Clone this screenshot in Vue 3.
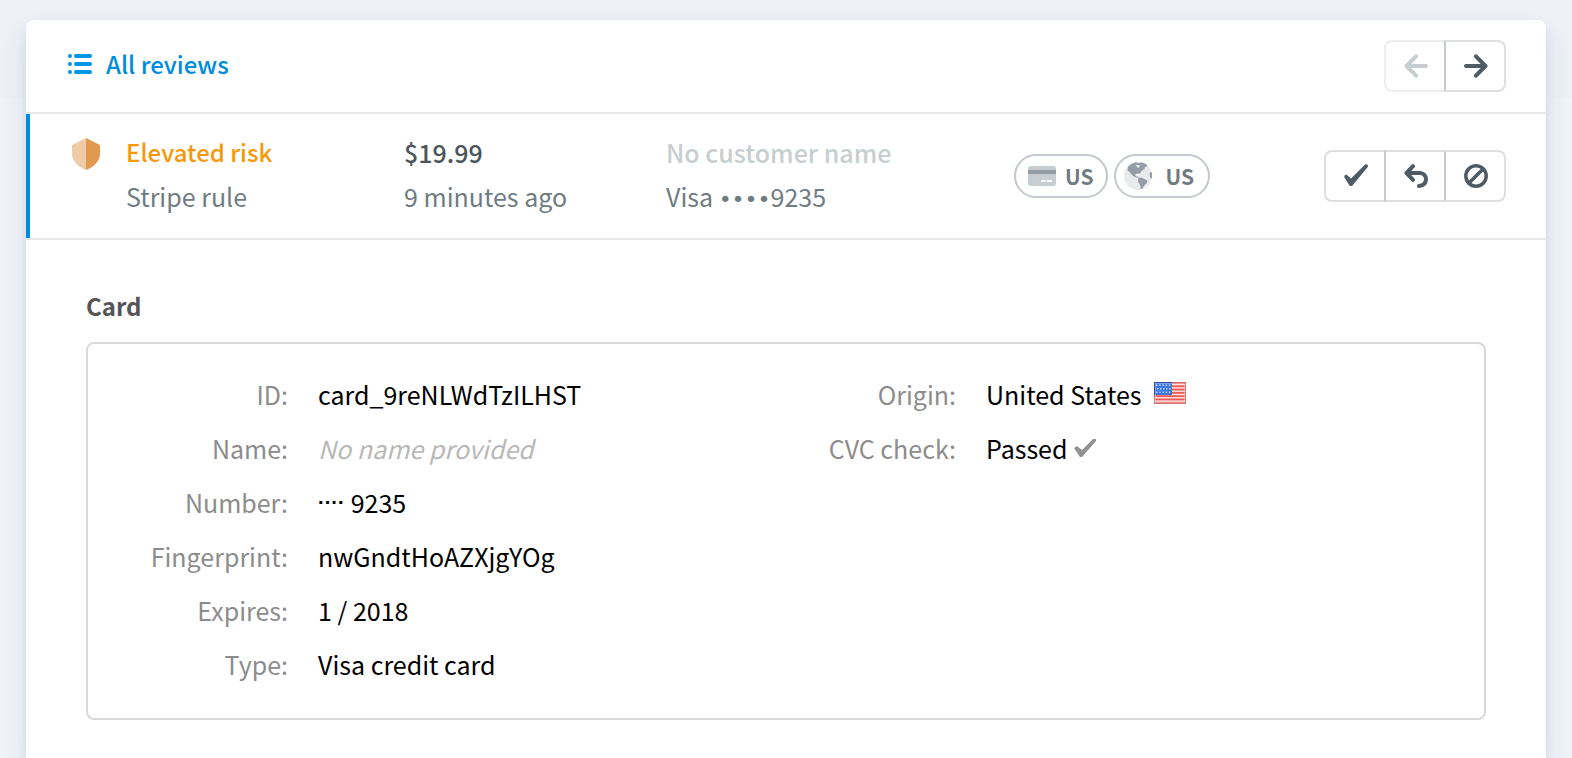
<script setup>
const leftDetails = [
  { label: 'ID:', value: 'card_9reNLWdTzILHST' },
  { label: 'Name:', value: 'No name provided', empty: true },
  { label: 'Number:', mask: '····', value: '9235' },
  { label: 'Fingerprint:', value: 'nwGndtHoAZXjgYOg' },
  { label: 'Expires:', value: '1 / 2018' },
  { label: 'Type:', value: 'Visa credit card' },
]
const stripes = [0, 1, 2, 3, 4, 5, 6]
const stars = [0, 1, 2, 3, 4]
</script>

<template>
  <div class="page">
    <main class="panel">
      <header class="toolbar">
        <a class="all-reviews" href="#">
          <svg class="list-icon" width="24" height="20" viewBox="0 0 24 20" aria-hidden="true">
            <g v-for="y in [2, 10, 18]" :key="y" fill="#0095e6">
              <circle cx="2" :cy="y" r="2" />
              <rect x="6" :y="y - 2" width="18" height="4" rx="2" />
            </g>
          </svg>
          All reviews
        </a>
        <div class="button-group">
          <button type="button" disabled aria-label="Previous review">
            <svg width="24" height="24" viewBox="0 0 24 24">
              <path d="M22 12H4M12 2.300L2.500 12L12 21.700" />
            </svg>
          </button>
          <button type="button" aria-label="Next review">
            <svg width="24" height="24" viewBox="0 0 24 24">
              <path d="M2 12H20M12 2.300L21.500 12L12 21.700" />
            </svg>
          </button>
        </div>
      </header>

      <section class="review">
        <svg class="shield" width="28" height="32" viewBox="0 0 28 32" aria-hidden="true">
          <path d="M14 0L0 7V16C0 23 6 29 14 32Z" fill="#efcca8" />
          <path d="M14 0L28 7V16C28 23 22 29 14 32Z" fill="#e1994f" />
        </svg>
        <div class="column">
          <p class="risk">Elevated risk</p>
          <p>Stripe rule</p>
        </div>
        <div class="column">
          <p class="amount">$19.99</p>
          <p>9 minutes ago</p>
        </div>
        <div class="column">
          <p class="no-customer">No customer name</p>
          <p>Visa <span class="bullets">••••</span>9235</p>
        </div>
        <div class="pills">
          <span class="pill">
            <svg width="28" height="20" viewBox="0 0 28 20" aria-hidden="true">
              <rect width="28" height="20" rx="3" fill="#c8cdd1" />
              <rect y="4" width="28" height="4" fill="#949ca5" />
              <rect x="13" y="14" width="5" height="2" fill="#fff" />
              <rect x="19" y="14" width="5" height="2" fill="#fff" />
            </svg>
            US
          </span>
          <span class="pill globe">
            <svg width="28" height="28" viewBox="0 0 28 28" aria-hidden="true">
              <circle cx="14" cy="14" r="14" fill="#e8eaec" />
              <path
                fill="#949ca5"
                d="M4 4.500L8 1.500L12 0.300L14 1L18 0.500L22 2L23.500 5L21 4.500L20.500 7L17.500 9L16 11.500L13.500 11.500L11 12.500L12 14.500L14.500 14.500L15 15.500L12 15.500L8.500 13.500L5.500 10L3.500 8.500Z M14.500 16L18 15.500L20 17L23.500 18.500L22.500 21.500L20.500 23L18.500 26.500L17 27.500L16 23L14 19.500Z M28 10.500L26.500 10L25.500 12L26 15L28 17Z"
              />
              <path fill="#e8eaec" d="M12 3L15 2.800L16 4.500L14 6L13 5Z" />
            </svg>
            US
          </span>
        </div>
        <div class="button-group">
          <button type="button" aria-label="Approve">
            <svg width="24" height="24" viewBox="0 0 24 24">
              <path
                class="solid"
                d="M0.500 13.500C-0.500 11.800 1.800 10 3.300 11.200L7 14.500L20.800 0.700C22.800 -0.800 25 1.400 23.500 3.200L9.300 20.500C8 22.500 6 22.500 4.800 20.500Z"
              />
            </svg>
          </button>
          <button type="button" aria-label="Refund">
            <svg width="24" height="24" viewBox="0 0 24 24">
              <path d="M3 9H16C19.500 9 22 12 22 15C22 19 19.500 21.500 15 22M9 2.200L2.500 9L9 15.800" />
            </svg>
          </button>
          <button type="button" aria-label="Block">
            <svg width="24" height="24" viewBox="0 0 24 24">
              <circle cx="12" cy="12" r="10.200" />
              <path d="M5.500 18.500L18.500 5.500" />
            </svg>
          </button>
        </div>
      </section>

      <section class="card-section">
        <h2>Card</h2>
        <div class="card-box">
          <dl>
            <div v-for="item in leftDetails" :key="item.label" class="detail">
              <dt>{{ item.label }}</dt>
              <dd :class="{ empty: item.empty }">
                <span v-if="item.mask" class="mask">{{ item.mask }}</span>
                {{ item.value }}
              </dd>
            </div>
          </dl>
          <dl>
            <div class="detail">
              <dt>Origin:</dt>
              <dd>
                United States
                <svg class="flag" width="32" height="22" viewBox="0 0 32 22" aria-hidden="true">
                  <rect width="32" height="22" fill="#fbe9e6" />
                  <rect v-for="n in stripes" :key="n" :y="n * 3.300" width="32" height="1.900" fill="#ee5a56" />
                  <rect width="18" height="13" fill="#3f78dc" />
                  <g v-for="n in stars" :key="n" fill="#b9d3fa">
                    <rect :x="2 + n * 3.200" y="2.500" width="1.500" height="1.500" />
                    <rect :x="3 + n * 3" y="6" width="1.500" height="1.500" />
                    <rect :x="2 + n * 3.200" y="9.500" width="1.500" height="1.500" />
                  </g>
                  <rect x="1" y="1" width="30" height="20" fill="none" stroke="#fff" stroke-opacity="0.300" stroke-width="2" />
                  <path d="M18 0.500H31.500V21.500H0.500V13" fill="none" stroke="#b5544f" stroke-opacity="0.600" />
                  <path d="M18 0.500H0.500V13" fill="none" stroke="#3a48a8" />
                </svg>
              </dd>
            </div>
            <div class="detail">
              <dt>CVC check:</dt>
              <dd>
                Passed
                <svg class="tick" width="24" height="20" viewBox="0 0 24 20" aria-hidden="true">
                  <path d="M1 10L4 8L9 12L20 1L23 1L23 3L9 19H7Z" fill="#929292" />
                </svg>
              </dd>
            </div>
          </dl>
        </div>
      </section>
    </main>
  </div>
</template>

<style>
body {
  margin: 0;
  background: #eff3f8;
}
</style>

<style scoped>
.page {
  box-sizing: border-box;
  min-height: 100vh;
  padding: 20px 26px 0;
  display: flex;
  background: linear-gradient(#edf1f6 98px, #eff3f8 98px);
  font-family: "Noto Sans CJK SC", "Noto Sans", sans-serif;
  font-size: 25px;
  line-height: 44px;
  color: #6f7c82;
}
.panel {
  flex: 1;
  min-width: 0;
  background: #fff;
  border-radius: 8px 8px 0 0;
  box-shadow: 0 14px 26px rgba(50, 60, 95, 0.1), 0 5px 10px rgba(50, 60, 95, 0.08);
}
.toolbar {
  display: flex;
  align-items: center;
  justify-content: space-between;
  padding: 20px 40px 20px 42px;
  border-bottom: 2px solid #e8e8e8;
}
.all-reviews {
  display: flex;
  align-items: center;
  gap: 14px;
  padding-bottom: 4px;
  color: #008cdd;
  font-size: 24px;
  font-weight: 500;
  text-decoration: none;
}
.button-group {
  display: flex;
}
button {
  box-sizing: border-box;
  width: 60px;
  height: 52px;
  padding: 0 0 0 2px;
  display: flex;
  align-items: center;
  justify-content: center;
  background: #fff;
  border: 2px solid #dddfe0;
  border-left-color: #c6cbcf;
}
button:not(:last-child) {
  border-right: 0;
}
button:first-child {
  border-left-color: #dddfe0;
  border-radius: 8px 0 0 8px;
}
button:last-child {
  width: 62px;
  border-radius: 0 8px 8px 0;
}
button:disabled {
  border-color: #eee;
}
button svg {
  fill: none;
  stroke: #4f5b64;
  stroke-width: 4;
  stroke-linecap: round;
  stroke-linejoin: round;
}
button circle,
button circle + path {
  stroke-width: 3.5;
}
button .solid {
  fill: #4f5b64;
  stroke: none;
}
button:disabled svg {
  stroke: #c8cdd0;
}
.review {
  display: grid;
  grid-template-columns: 54px 278fr 262fr 348fr 310fr 182px;
  align-items: center;
  padding: 16px 40px 16px 42px;
  border-left: 4px solid #008cdd;
}
.column {
  padding-bottom: 4px;
}
.shield {
  align-self: start;
  margin-top: 8px;
}
p {
  margin: 0;
  white-space: nowrap;
}
.risk {
  color: #f5990b;
  font-size: 24px;
  font-weight: 500;
}
.amount {
  color: #4b555b;
  font-weight: 500;
}
.no-customer {
  color: #c8cdd0;
  font-weight: 500;
}
.bullets {
  font-family: "DejaVu Sans", sans-serif;
  font-size: 22px;
  line-height: 1;
}
.mask {
  margin-right: 6px;
  font-family: "Liberation Sans", sans-serif;
  font-size: 20px;
  font-weight: 700;
}
.pills {
  display: flex;
  gap: 6px;
}
.pill {
  box-sizing: border-box;
  height: 44px;
  padding: 0 12px;
  display: flex;
  align-items: center;
  gap: 9px;
  border: 2px solid #c3c8cc;
  border-radius: 22px;
  font-size: 21px;
  line-height: 40px;
  font-weight: 700;
}
.globe {
  padding: 0 14px 0 8px;
  gap: 14px;
}
.card-section {
  padding: 44px 60px 38px;
  border-top: 2px solid #e8e8e8;
}
h2 {
  margin: 0 0 14px;
  font-size: 24px;
  line-height: 44px;
  font-weight: 700;
  color: #555;
}
.card-box {
  display: grid;
  grid-template-columns: 1fr 1fr;
  padding: 23px 60px 27px 0;
  border: 2px solid #d9d9d9;
  border-radius: 8px;
}
dl {
  margin: 0;
}
.detail {
  display: grid;
  grid-template-columns: 200px 1fr;
  column-gap: 30px;
  line-height: 54px;
}
dt {
  text-align: right;
  color: #8c8c8c;
}
dd {
  margin: 0;
  display: flex;
  align-items: center;
  color: #000;
}
.empty {
  color: #b8b8b8;
  font-style: italic;
}
.flag {
  margin: 0 0 2px 12px;
}
.tick {
  margin-left: 6px;
}
</style>
